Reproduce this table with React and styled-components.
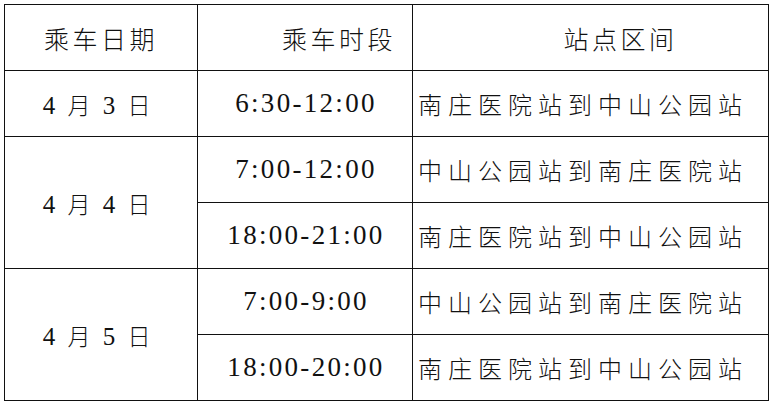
import React from "react";
import styled, { createGlobalStyle } from "styled-components";

const GlobalStyle = createGlobalStyle`
  html, body {
    margin: 0;
    padding: 0;
    background: #fff;
  }
  body {
    font-family: "Liberation Serif", "Noto Sans CJK SC", serif;
    color: #111;
  }
`;

const Page = styled.div`
  padding: 4px 0 0 4px;
`;

const Table = styled.table`
  border-collapse: collapse;
  table-layout: fixed;
  width: 764px;
`;

const Col = styled.col`
  width: ${(p) => p.$w}px;
`;

const Row = styled.tr`
  height: 66px;
`;

const Cell = styled.td`
  border: 1.4px solid #111;
  padding: 0;
  height: 64px;
  vertical-align: middle;
  white-space: nowrap;
`;

const HeadCell = styled(Cell)`
  font-family: "Noto Sans CJK SC", sans-serif;
  font-size: 25px;
  font-weight: 300;
  letter-spacing: 3.5px;
  text-align: ${(p) => p.$align || "center"};
  padding-left: ${(p) => p.$pl || 0}px;
  padding-right: ${(p) => p.$pr || 0}px;
`;

const DateCell = styled(Cell)`
  font-size: 25px;
  letter-spacing: 3px;
  text-align: center;
  padding-right: 6px;
`;

const DateHan = styled.span`
  font-family: "Noto Sans CJK SC", sans-serif;
  font-size: 23px;
  font-weight: 300;
`;

const TimeCell = styled(Cell)`
  font-size: 27px;
  letter-spacing: 2.3px;
  text-align: center;
  padding-left: 2px;
`;

const RouteCell = styled(Cell)`
  font-family: "Noto Sans CJK SC", sans-serif;
  font-size: 24px;
  font-weight: 300;
  letter-spacing: 6px;
  padding-left: 5px;
`;

const DateText = ({ day }) => (
  <>
    4 <DateHan>月</DateHan> {day} <DateHan>日</DateHan>
  </>
);

const A = "南庄医院站到中山公园站";
const B = "中山公园站到南庄医院站";

const App = () => {
  return (
    <Page>
      <GlobalStyle />
      <Table>
        <colgroup>
          <Col $w={193} />
          <Col $w={215} />
          <Col $w={356} />
        </colgroup>
        <tbody>
          <Row>
            <HeadCell>乘车日期</HeadCell>
            <HeadCell $align="right" $pr={16}>
              乘车时段
            </HeadCell>
            <HeadCell $pl={60}>站点区间</HeadCell>
          </Row>
          <Row>
            <DateCell>
              <DateText day={3} />
            </DateCell>
            <TimeCell>6:30-12:00</TimeCell>
            <RouteCell>{A}</RouteCell>
          </Row>
          <Row>
            <DateCell rowSpan={2}>
              <DateText day={4} />
            </DateCell>
            <TimeCell>7:00-12:00</TimeCell>
            <RouteCell>{B}</RouteCell>
          </Row>
          <Row>
            <TimeCell>18:00-21:00</TimeCell>
            <RouteCell>{A}</RouteCell>
          </Row>
          <Row>
            <DateCell rowSpan={2}>
              <DateText day={5} />
            </DateCell>
            <TimeCell>7:00-9:00</TimeCell>
            <RouteCell>{B}</RouteCell>
          </Row>
          <Row>
            <TimeCell>18:00-20:00</TimeCell>
            <RouteCell>{A}</RouteCell>
          </Row>
        </tbody>
      </Table>
    </Page>
  );
};

export default App;
